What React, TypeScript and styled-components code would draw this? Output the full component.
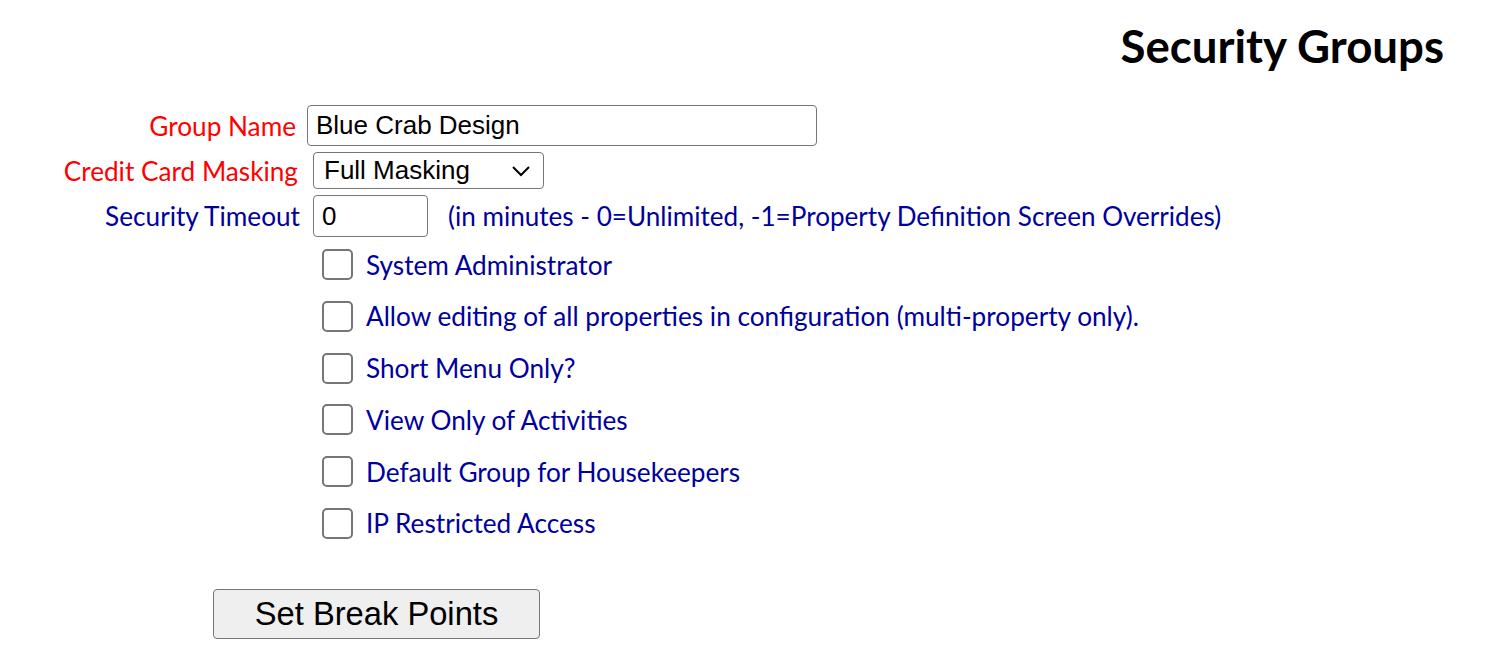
import React from 'react'
import styled, { createGlobalStyle } from 'styled-components'

const GlobalStyle = createGlobalStyle`
	html, body {
		margin: 0;
		padding: 0;
		background: #ffffff;
	}
	body {
		font-family: Lato, 'Liberation Sans', sans-serif;
	}
`

const Page = styled.div`
	width: 1492px;
	height: 669px;
	box-sizing: border-box;
	padding: 16px 48px 0 0;
	overflow: hidden;
`

const Title = styled.h1`
	margin: 0;
	text-align: right;
	font-family: Lato, sans-serif;
	font-weight: 700;
	font-size: 45.6px;
	line-height: 60px;
	color: #000;
`

const FormGrid = styled.div`
	display: grid;
	grid-template-columns: 300px 1fr;
	row-gap: 6px;
	margin-top: 29px;
	align-items: center;
`

const Label = styled.label<{ $tone: 'red' | 'blue'; $pad?: number }>`
	text-align: right;
	padding-right: ${p => p.$pad ?? 4}px;
	font-size: 26.2px;
	color: ${p => (p.$tone === 'red' ? '#ff0000' : '#00009c')};
	white-space: nowrap;
`

const Field = styled.div<{ $offset: number }>`
	display: flex;
	align-items: center;
	gap: 20px;
	padding-left: ${p => p.$offset}px;
`

const TextInput = styled.input<{ $w: number; $h: number }>`
	box-sizing: border-box;
	width: ${p => p.$w}px;
	height: ${p => p.$h}px;
	border: 1.5px solid #767676;
	border-radius: 4px;
	padding: 0 8px;
	font-family: 'Liberation Sans', Arial, sans-serif;
	font-size: 26px;
	color: #000;
	outline: none;
`

const SelectBox = styled.div`
	box-sizing: border-box;
	width: 231px;
	height: 37px;
	border: 1.5px solid #767676;
	border-radius: 4px;
	padding: 0 12px 0 10px;
	display: flex;
	align-items: center;
	justify-content: space-between;
	font-family: 'Liberation Sans', Arial, sans-serif;
	font-size: 26px;
	color: #000;
`

const Hint = styled.span`
	font-size: 26.1px;
	color: #00009c;
	white-space: nowrap;
`

const CheckList = styled.div`
	display: flex;
	flex-direction: column;
	gap: 20.8px;
	margin-top: 12px;
	padding-left: 322px;
`

const CheckRow = styled.label`
	display: flex;
	align-items: center;
	gap: 13px;
	font-size: 26.2px;
	color: #00009c;
	height: 31px;
`

const Box = styled.span`
	box-sizing: border-box;
	width: 31px;
	height: 31px;
	border: 2px solid #767676;
	border-radius: 5px;
	background: #fff;
	flex: none;
`

const ButtonRow = styled.div`
	padding-left: 213px;
	margin-top: 50px;
`

const Button = styled.button`
	box-sizing: border-box;
	width: 327px;
	height: 50px;
	background: #efefef;
	border: 1.5px solid #767676;
	border-radius: 4px;
	font-family: 'Liberation Sans', Arial, sans-serif;
	font-size: 32.7px;
	color: #000;
	padding: 0;
`

const checks = [
	'System Administrator',
	'Allow editing of all properties in configuration (multi-property only).',
	'Short Menu Only?',
	'View Only of Activities',
	'Default Group for Housekeepers',
	'IP Restricted Access',
]

const App = () => {
	return (
		<Page>
			<GlobalStyle />
			<Title>Security Groups</Title>
			<FormGrid>
				<Label $tone='red' $pad={4}>Group Name</Label>
				<Field $offset={7}>
					<TextInput $w={510} $h={41} defaultValue='Blue Crab Design' />
				</Field>
				<Label $tone='red' $pad={2}>Credit Card Masking</Label>
				<Field $offset={13}>
					<SelectBox>
						<span>Full Masking</span>
						<svg width='20' height='12' viewBox='0 0 20 12'>
							<path d='M2 2 L10 10 L18 2' fill='none' stroke='#000' strokeWidth='2' />
						</svg>
					</SelectBox>
				</Field>
				<Label $tone='blue' $pad={0}>Security Timeout</Label>
				<Field $offset={13}>
					<TextInput $w={115} $h={42} defaultValue='0' />
					<Hint>(in minutes - 0=Unlimited, -1=Property Definition Screen Overrides)</Hint>
				</Field>
			</FormGrid>
			<CheckList>
				{checks.map(text => (
					<CheckRow key={text}>
						<Box />
						{text}
					</CheckRow>
				))}
			</CheckList>
			<ButtonRow>
				<Button>Set Break Points</Button>
			</ButtonRow>
		</Page>
	)
}

export default App
